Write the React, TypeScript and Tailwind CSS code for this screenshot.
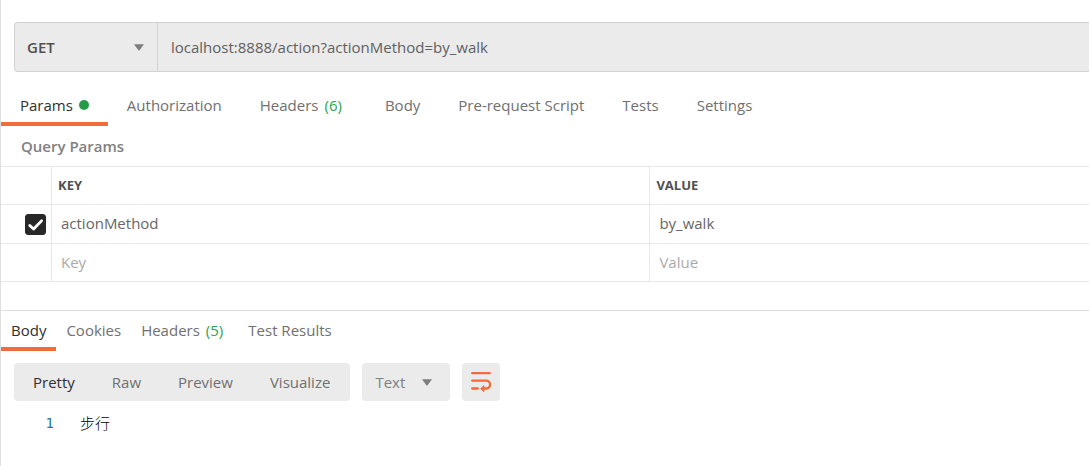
import { useState } from 'react';
import type { ReactNode } from 'react';
import clsx from 'clsx';

type Tab = { name: string; count?: number; dot?: boolean };

const requestTabs: Tab[] = [
  { name: 'Params', dot: true },
  { name: 'Authorization' },
  { name: 'Headers', count: 6 },
  { name: 'Body' },
  { name: 'Pre-request Script' },
  { name: 'Tests' },
  { name: 'Settings' },
];

const responseTabs: Tab[] = [
  { name: 'Body' },
  { name: 'Cookies' },
  { name: 'Headers', count: 5 },
  { name: 'Test Results' },
];

const viewModes = ['Pretty', 'Raw', 'Preview', 'Visualize'];

function Caret({ className }: { className?: string }) {
  return (
    <svg viewBox="0 0 10 7" className={clsx('pointer-events-none h-[7px] w-[10px]', className)} aria-hidden="true">
      <path d="M0 0.3h10L5.6 6.2q-.6.7-1.2 0z" fill="#7d7d7d" />
    </svg>
  );
}

function WrapIcon() {
  return (
    <svg viewBox="0 0 20 20" className="h-5 w-5" fill="none" stroke="#f26b3a" strokeWidth="2.3" strokeLinecap="round" aria-hidden="true">
      <path d="M1.2 1.2h17.6" />
      <path d="M1.2 8.7h14a3.8 3.8 0 0 1 0 7.8H13" />
      <path d="M1.2 16.5h5.6" />
      <path d="M9.9 16.5l3-2.8v5.6z" fill="#f26b3a" strokeWidth="1" strokeLinejoin="round" />
    </svg>
  );
}

function TabBar({ tabs, tabClass, label }: { tabs: Tab[]; tabClass: string; label: string }) {
  const [active, setActive] = useState(tabs[0].name);

  return (
    <div role="tablist" aria-label={label} className="flex">
      {tabs.map((tab) => (
        <button
          key={tab.name}
          type="button"
          role="tab"
          aria-selected={tab.name === active}
          onClick={() => setActive(tab.name)}
          className={clsx(
            'flex items-center border-b-4 whitespace-nowrap',
            tabClass,
            tab.name === active ? 'border-[#f26b3a] text-[#303030]' : 'border-transparent text-[#707070]',
          )}
        >
          {tab.name}
          {tab.dot && <span className="ml-1.5 h-2.5 w-2.5 rounded-full bg-[#249c47]" />}
          {tab.count !== undefined && <span className="mr-[5px] ml-1.5 text-[#2ea44f]">({tab.count})</span>}
        </button>
      ))}
    </div>
  );
}

function Cell({ children }: { children?: ReactNode }) {
  return <td className="border-r border-b border-[#e8e8e8] p-0 align-middle last:border-r-0">{children}</td>;
}

function ParamInput({ label, placeholder, defaultValue }: { label: string; placeholder?: string; defaultValue?: string }) {
  return (
    <input
      type="text"
      aria-label={label}
      placeholder={placeholder}
      defaultValue={defaultValue}
      className="block h-9 w-full bg-transparent px-[9px] pb-0.5 text-[#666] outline-none placeholder:text-[#aaa]"
    />
  );
}

function ParamsTable() {
  return (
    <table className="w-full table-fixed border-separate border-spacing-0 border-t border-[#e8e8e8]">
      <colgroup>
        <col className="w-[51px]" />
        <col className="w-[55%]" />
        <col />
      </colgroup>
      <thead>
        <tr className="h-[38px] text-left text-[13px] text-[#505050]">
          <Cell />
          <th className="border-r border-b border-[#e8e8e8] px-1.5 pt-0 pb-0.5 font-bold">KEY</th>
          <th className="border-b border-[#e8e8e8] px-1.5 pt-0 pb-0.5 font-bold">VALUE</th>
        </tr>
      </thead>
      <tbody>
        <tr className="h-[39px]">
          <Cell>
            <div className="relative mr-[5px] ml-auto h-[21px] w-[21px]">
              <input
                type="checkbox"
                defaultChecked
                aria-label="Enable actionMethod"
                className="peer block h-full w-full appearance-none rounded-[3px] border border-[#dcdcdc] checked:border-[#282828] checked:bg-[#282828]"
              />
              <svg viewBox="0 0 22 22" className="pointer-events-none absolute inset-0 hidden peer-checked:block" fill="none" stroke="#fff" strokeWidth="3" strokeLinecap="round" strokeLinejoin="round" aria-hidden="true">
                <path d="M5 12l4 3.8 8.3-8.6" />
              </svg>
            </div>
          </Cell>
          <Cell><ParamInput label="Key 1" defaultValue="actionMethod" /></Cell>
          <Cell><ParamInput label="Value 1" defaultValue="by_walk" /></Cell>
        </tr>
        <tr className="h-[38px]">
          <Cell />
          <Cell><ParamInput label="New key" placeholder="Key" /></Cell>
          <Cell><ParamInput label="New value" placeholder="Value" /></Cell>
        </tr>
      </tbody>
    </table>
  );
}

function ResponseToolbar() {
  const [mode, setMode] = useState('Pretty');

  return (
    <div className="flex gap-3 pt-3 pl-[13px]">
      <div className="flex h-[38px] gap-[37px] rounded bg-[#ebebeb] pr-5 pl-[19px]">
        {viewModes.map((name) => (
          <button
            key={name}
            type="button"
            aria-pressed={name === mode}
            onClick={() => setMode(name)}
            className={name === mode ? 'text-[#303030]' : 'text-[#707070]'}
          >
            {name}
          </button>
        ))}
      </div>
      <div className="relative">
        <select aria-label="Response format" className="h-[38px] w-[88px] appearance-none rounded bg-[#ebebeb] pl-[13px] text-[#808080]">
          <option>Text</option>
          <option>JSON</option>
        </select>
        <Caret className="absolute top-4 right-[18px]" />
      </div>
      <button type="button" aria-label="Wrap lines" className="flex h-[38px] w-[38px] items-center justify-center rounded bg-[#ebebeb]">
        <WrapIcon />
      </button>
    </div>
  );
}

export default function App() {
  return (
    <main className="min-h-screen overflow-hidden border-l border-[#dedede] bg-white pt-[22px] font-['Open_Sans','Noto_Sans_CJK_SC',sans-serif] text-[15px] leading-5">
      <div className="ml-[13px] flex h-[50px] rounded-l border border-r-0 border-[#d2d2d2] bg-[#ebebeb]">
        <div className="relative w-[143px] border-r border-[#d2d2d2]">
          <select aria-label="Method" className="h-full w-full appearance-none pl-3 font-semibold text-[#505050]">
            <option>GET</option>
            <option>POST</option>
          </select>
          <Caret className="absolute top-[21px] right-[13px]" />
        </div>
        <input
          type="text"
          aria-label="Request URL"
          defaultValue="localhost:8888/action?actionMethod=by_walk"
          className="min-w-0 flex-1 bg-transparent px-[13px] text-[#606060] outline-none"
        />
      </div>

      <div className="pt-3">
        <TabBar tabs={requestTabs} label="Request" tabClass="h-[42px] px-[19px] pt-1" />
      </div>

      <h2 className="px-5 py-2.5 font-semibold text-[#808080]">Query Params</h2>
      <ParamsTable />

      <section className="mt-7 border-t border-[#dedede]">
        <TabBar tabs={responseTabs} label="Response" tabClass="h-10 px-2.5 pt-0.5" />
        <ResponseToolbar />
        <div className="flex items-center gap-[26px] pt-3">
          <span className="w-[53px] text-right font-['DejaVu_Sans_Mono',monospace] text-sm text-[#237893]">1</span>
          <code className="font-['Noto_Sans_CJK_SC',sans-serif] text-[15px] leading-5 font-light text-black">步行</code>
        </div>
      </section>
    </main>
  );
}
